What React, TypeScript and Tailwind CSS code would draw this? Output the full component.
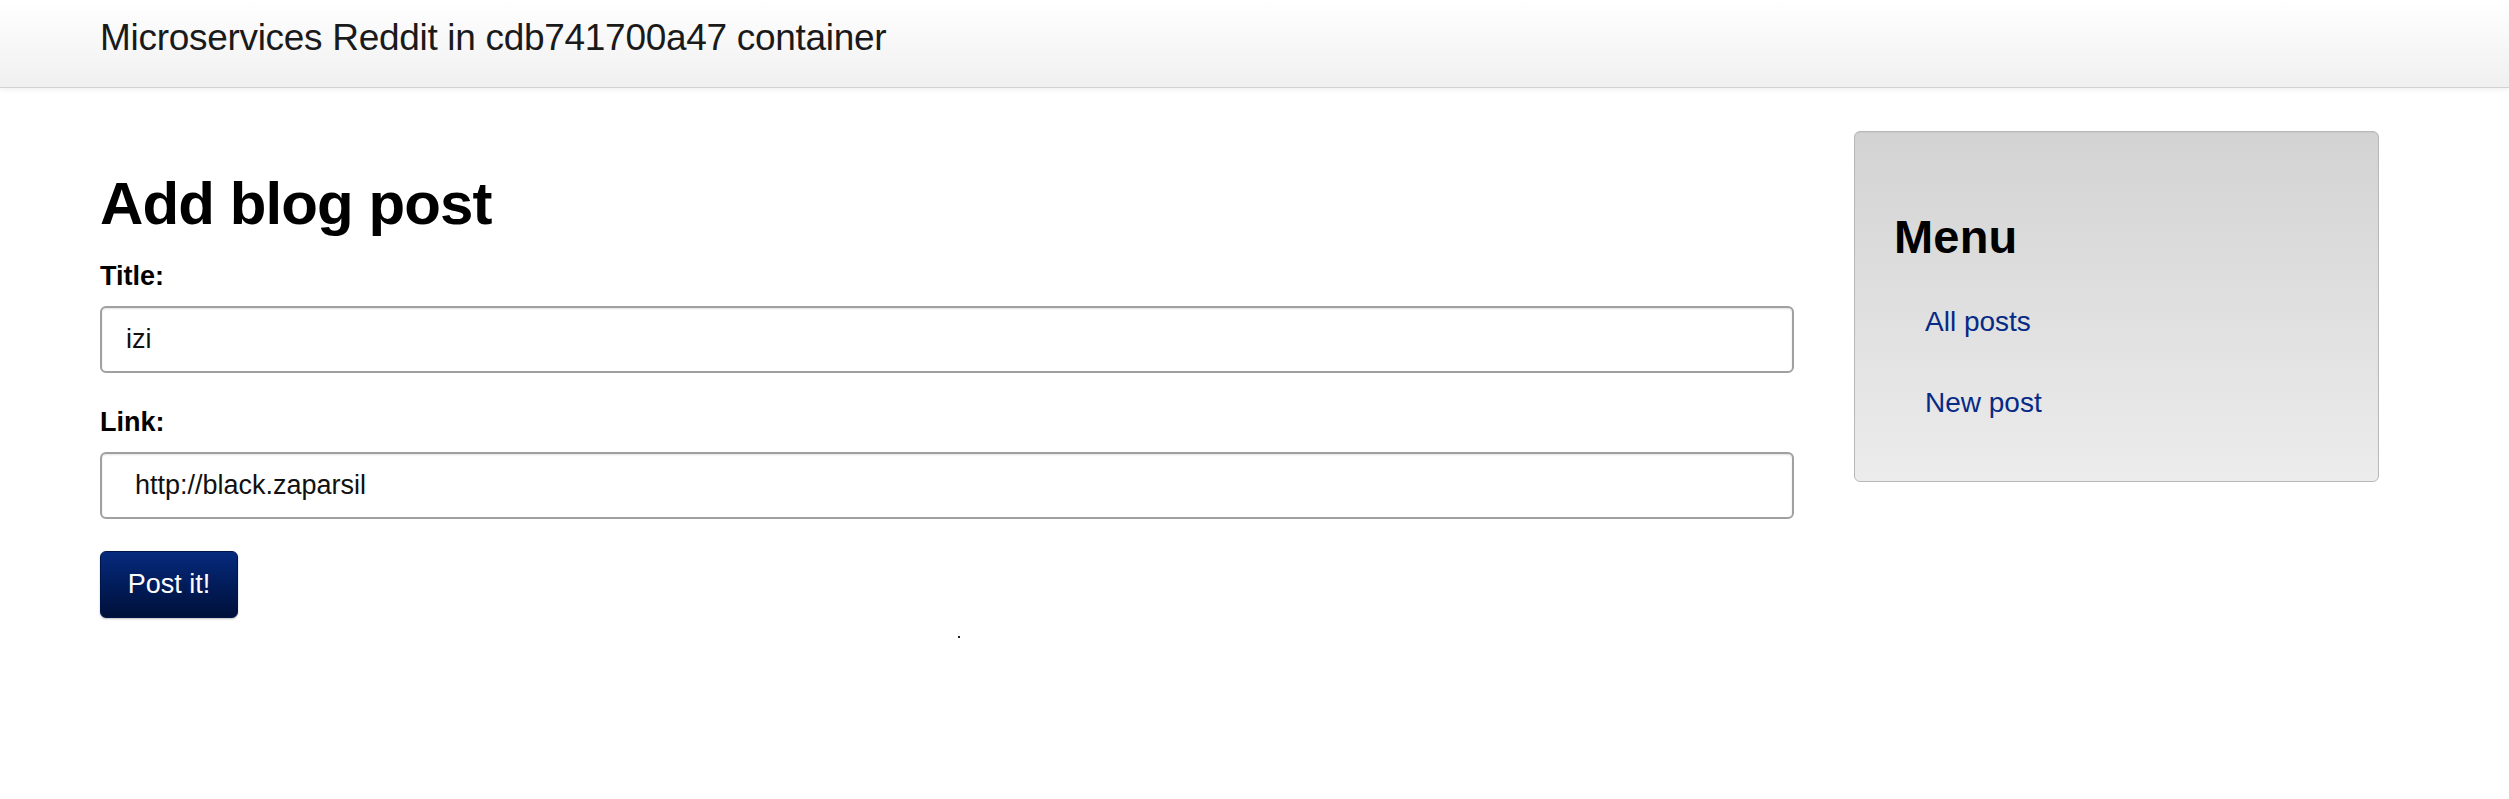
export default function App() {
  return (
    <div className="min-h-screen bg-white font-['Liberation_Sans',Arial,sans-serif] text-[#111]">
      {/* Navbar */}
      <div className="h-[88px] border-b border-[#d2d2d2] bg-linear-to-b from-white to-[#f0f0f0] pl-[100px] pt-[19px] shadow-[0_1px_6px_rgba(0,0,0,0.08)]">
        <div className="text-[37px] leading-[37px] tracking-[-0.3px] text-[#1a1a1a]">
          Microservices Reddit in cdb741700a47 container
        </div>
      </div>

      <div className="flex gap-[60px] pl-[100px]">
        {/* Main column */}
        <div className="w-[1694px] pt-[86px]">
          <h1 className="mb-[29px] text-[60px] font-bold leading-[60px] tracking-[-0.9px] text-black">
            Add blog post
          </h1>

          <label className="mb-[16px] block text-[27px] font-bold leading-[27px] text-black">Title:</label>
          <input
            defaultValue="izi"
            className="mb-[36px] block h-[67px] w-full rounded-[6px] border-2 border-[#a0a0a0] bg-white pl-[24px] text-[27px] text-[#111] shadow-[inset_0_1px_2px_rgba(0,0,0,0.12)] outline-none"
          />

          <label className="mb-[16px] block text-[27px] font-bold leading-[27px] text-black">Link:</label>
          <input
            defaultValue="http://black.zaparsil"
            className="mb-[32px] block h-[67px] w-full rounded-[6px] border-2 border-[#a0a0a0] bg-white pl-[33px] text-[27px] text-[#111] shadow-[inset_0_1px_2px_rgba(0,0,0,0.12)] outline-none"
          />

          <button className="block h-[67px] w-[138px] rounded-[6px] border border-[#00154a] bg-linear-to-b from-[#062a7e] to-[#00103a] text-[27px] leading-none text-white shadow-[0_1px_2px_rgba(0,0,0,0.25)]">
            Post it!
          </button>

          <div className="ml-[858px] mt-[18px] h-[2px] w-[2px] bg-[#222]" />
        </div>

        {/* Sidebar */}
        <div className="mt-[43px] h-fit w-[525px] rounded-[6px] border border-[#b8b8b8] bg-linear-to-b from-[#d3d3d3] to-[#ececec] pb-[64px] pl-[39px] pt-[81px] shadow-[inset_0_1px_1px_rgba(0,0,0,0.05)]">
          <h2 className="text-[47px] font-bold leading-[47px] tracking-[0.2px] text-black">Menu</h2>
          <ul className="ml-[31px] mt-[48px] flex flex-col gap-[53px] text-[28px] leading-[28px]">
            <li>
              <a href="#" className="text-[#062a85]">All posts</a>
            </li>
            <li>
              <a href="#" className="text-[#062a85]">New post</a>
            </li>
          </ul>
        </div>
      </div>
    </div>
  );
}
